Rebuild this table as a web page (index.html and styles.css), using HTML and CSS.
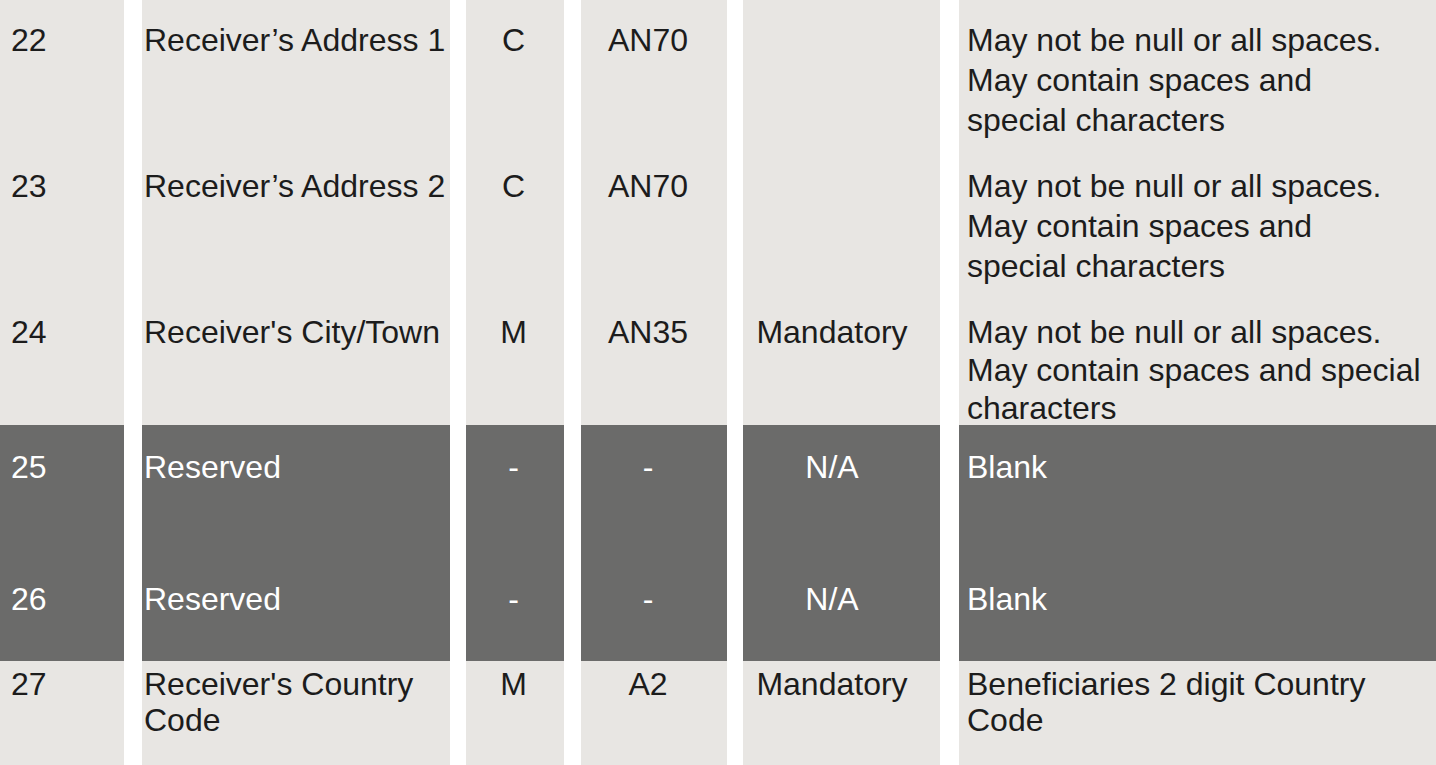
FILE: index.html
```html
<!DOCTYPE html>
<html lang="en">
<head>
<meta charset="utf-8">
<title>Receiver fields</title>
<link rel="stylesheet" href="styles.css">
</head>
<body>
<div class="table">
  <div class="row r22">
    <div class="cell c1">22</div>
    <div class="cell c2">Receiver’s Address 1</div>
    <div class="cell c3">C</div>
    <div class="cell c4">AN70</div>
    <div class="cell c5"></div>
    <div class="cell c6">May not be null or all spaces.<br>May contain spaces and<br>special characters</div>
  </div>
  <div class="row r23">
    <div class="cell c1">23</div>
    <div class="cell c2">Receiver’s Address 2</div>
    <div class="cell c3">C</div>
    <div class="cell c4">AN70</div>
    <div class="cell c5"></div>
    <div class="cell c6">May not be null or all spaces.<br>May contain spaces and<br>special characters</div>
  </div>
  <div class="row r24">
    <div class="cell c1">24</div>
    <div class="cell c2">Receiver's City/Town</div>
    <div class="cell c3">M</div>
    <div class="cell c4">AN35</div>
    <div class="cell c5">Mandatory</div>
    <div class="cell c6">May not be null or all spaces.<br>May contain spaces and special<br>characters</div>
  </div>
  <div class="row r25 dark">
    <div class="cell c1">25</div>
    <div class="cell c2">Reserved</div>
    <div class="cell c3">-</div>
    <div class="cell c4">-</div>
    <div class="cell c5">N/A</div>
    <div class="cell c6">Blank</div>
  </div>
  <div class="row r26 dark">
    <div class="cell c1">26</div>
    <div class="cell c2">Reserved</div>
    <div class="cell c3">-</div>
    <div class="cell c4">-</div>
    <div class="cell c5">N/A</div>
    <div class="cell c6">Blank</div>
  </div>
  <div class="row r27">
    <div class="cell c1">27</div>
    <div class="cell c2">Receiver's Country<br>Code</div>
    <div class="cell c3">M</div>
    <div class="cell c4">A2</div>
    <div class="cell c5">Mandatory</div>
    <div class="cell c6">Beneficiaries 2 digit Country<br>Code</div>
  </div>
</div>
</body>
</html>
```

FILE: styles.css
```css
html, body {
  margin: 0;
  padding: 0;
  background: #ffffff;
}

body {
  width: 1436px;
  height: 765px;
  overflow: hidden;
  font-family: "Liberation Sans", Arial, sans-serif;
  font-size: 32px;
  color: #1c1c1c;
}

.table {
  display: flex;
  flex-direction: column;
}

.row {
  display: grid;
  grid-template-columns: 124px 326px 114px 163px 213px 1fr;
  line-height: 40px;
}

.cell {
  background: #e8e6e3;
  white-space: nowrap;
}

.dark .cell {
  background: #6b6b6a;
  color: #ffffff;
}

.c1 { padding-left: 11px; }
.c2 { margin-left: 18px; padding-left: 2px; }
.c3 { margin-left: 16px; text-align: center; padding-right: 3px; }
.c4 { margin-left: 17px; text-align: center; padding-right: 12px; }
.c5 { margin-left: 16px; text-align: center; padding-right: 19px; }
.c6 { margin-left: 19px; padding-left: 8px; }

.r22 { height: 147px; }
.r22 .cell { padding-top: 20px; }

.r23 { height: 145px; }
.r23 .cell { padding-top: 19px; }

.r24 { height: 133px; line-height: 38px; }
.r24 .cell { padding-top: 21px; }

.r25 { height: 110px; }
.r25 .cell { padding-top: 22px; }

.r26 { height: 126px; }
.r26 .cell { padding-top: 44px; }

.r27 { height: 104px; line-height: 36px; }
.r27 .cell { padding-top: 5px; }
```
